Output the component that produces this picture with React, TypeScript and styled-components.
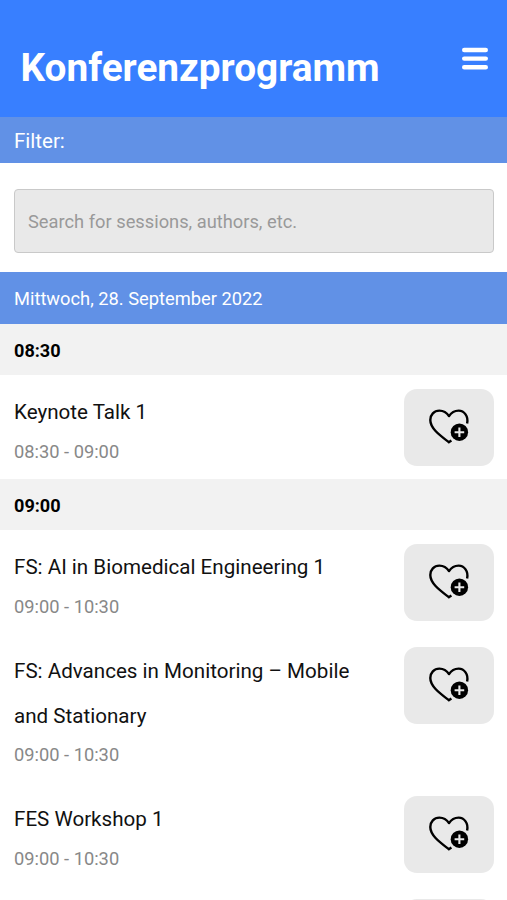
import React from "react";
import styled, { createGlobalStyle } from "styled-components";

const GlobalStyle = createGlobalStyle`
  * { box-sizing: border-box; }
  html, body { margin: 0; height: 900px; overflow: hidden; }
  body { background: #fff; font-family: Roboto, "Noto Sans", sans-serif; }
`;

const Page = styled.main`
  width: 507px;
  height: 900px;
  overflow: hidden;
  color: #111;
`;

const Header = styled.header`
  display: flex;
  justify-content: space-between;
  align-items: flex-start;
  height: 117.4px;
  padding: 45px 18px 0 20.5px;
  background: #387fff;
  color: #fff;
`;

const Title = styled.h1`
  margin: 0;
  font-size: 38.75px;
  line-height: 46px;
  font-weight: 700;
`;

const MenuButton = styled.button`
  display: block;
  margin-top: 1px;
  padding: 0;
  border: 0;
  background: none;
  line-height: 0;
`;

const FilterBar = styled.div`
  height: 45.4px;
  padding-left: 14px;
  background: #6191e6;
  color: #fff;
  font-size: 20.5px;
  line-height: 49px;
`;

const SearchArea = styled.div`
  height: 109.4px;
  padding: 26.2px 13px 0 14px;
`;

const SearchInput = styled.input`
  display: block;
  width: 100%;
  height: 64px;
  padding: 2px 13px 0;
  border: 1px solid #c9c9c9;
  border-radius: 4px;
  background: #e9e9e9;
  font: 18.3px Roboto, sans-serif;
  &::placeholder { color: #999; opacity: 1; }
`;

const DayBar = styled.div`
  height: 51.6px;
  padding-left: 14px;
  background: #6191e6;
  color: #fff;
  font-size: 18.3px;
  line-height: 53px;
`;

const SlotBar = styled.h2`
  height: 51.5px;
  margin: 0;
  padding-left: 14px;
  background: #f2f2f2;
  color: #000;
  font-size: 18.1px;
  font-weight: 700;
  line-height: 53px;
`;

const Session = styled.article`
  display: flex;
  justify-content: space-between;
  align-items: flex-start;
  padding: 13.4px 13px 12.5px 14px;
`;

const SessionText = styled.div`
  width: 350px;
  padding-top: 1.7px;
`;

const SessionTitle = styled.h3`
  margin: 0;
  font-size: 20.6px;
  font-weight: 400;
  line-height: 45.4px;
`;

const SessionTime = styled.p`
  margin: 0 0 -0.9px;
  color: #888;
  font-size: 18.3px;
  line-height: 31.3px;
`;

const FavoriteButton = styled.button`
  display: flex;
  justify-content: center;
  align-items: center;
  flex: none;
  width: 90px;
  height: 77px;
  padding: 0;
  border: 0;
  border-radius: 13px;
  background: #e9e9e9;
`;

const MenuIcon = () => (
  <svg width="28" height="24" viewBox="0 0 28 24" stroke="#fff" strokeWidth="4.4" strokeLinecap="round">
    <path d="M3.2 4H24.8M3.2 12.6H24.8M3.2 21.3H24.8" />
  </svg>
);

const HeartPlusIcon = () => (
  <svg width="42" height="37" viewBox="0 0 42 37" fill="none">
    <path
      d="M39.1 14.6C40.7 7.2 36.2 1.6 30.6 1.6C26.3 1.6 23.2 3.7 21 7.1C18.8 3.7 15.7 1.6 11.4 1.6C6 1.6 2.3 5.7 2.3 11C2.3 18.9 10.2 25 20.8 33.2L23.4 31.4"
      stroke="#000"
      strokeWidth="2.4"
      strokeLinejoin="round"
    />
    <circle cx="31.4" cy="23.2" r="8.7" fill="#000" />
    <path d="M31.4 18.4V28M26.6 23.2H36.2" stroke="#e9e9e9" strokeWidth="2.1" />
  </svg>
);

type Talk = { title: string; time: string };

const slots: { start: string; talks: Talk[] }[] = [
  { start: "08:30", talks: [{ title: "Keynote Talk 1", time: "08:30 - 09:00" }] },
  {
    start: "09:00",
    talks: [
      { title: "FS: AI in Biomedical Engineering 1", time: "09:00 - 10:30" },
      { title: "FS: Advances in Monitoring – Mobile and Stationary", time: "09:00 - 10:30" },
      { title: "FES Workshop 1", time: "09:00 - 10:30" },
      { title: "", time: "" },
    ],
  },
];

export default function App() {
  return (
    <Page>
      <GlobalStyle />
      <Header>
        <Title>Konferenzprogramm</Title>
        <MenuButton aria-label="Menü">
          <MenuIcon />
        </MenuButton>
      </Header>
      <FilterBar>Filter:</FilterBar>
      <SearchArea>
        <SearchInput placeholder="Search for sessions, authors, etc." />
      </SearchArea>
      <DayBar>Mittwoch, 28. September 2022</DayBar>
      {slots.map((slot) => (
        <section key={slot.start}>
          <SlotBar>{slot.start}</SlotBar>
          {slot.talks.map((talk) => (
            <Session key={talk.title}>
              <SessionText>
                <SessionTitle>{talk.title}</SessionTitle>
                <SessionTime>{talk.time}</SessionTime>
              </SessionText>
              <FavoriteButton aria-label="Merken">
                <HeartPlusIcon />
              </FavoriteButton>
            </Session>
          ))}
        </section>
      ))}
    </Page>
  );
}
